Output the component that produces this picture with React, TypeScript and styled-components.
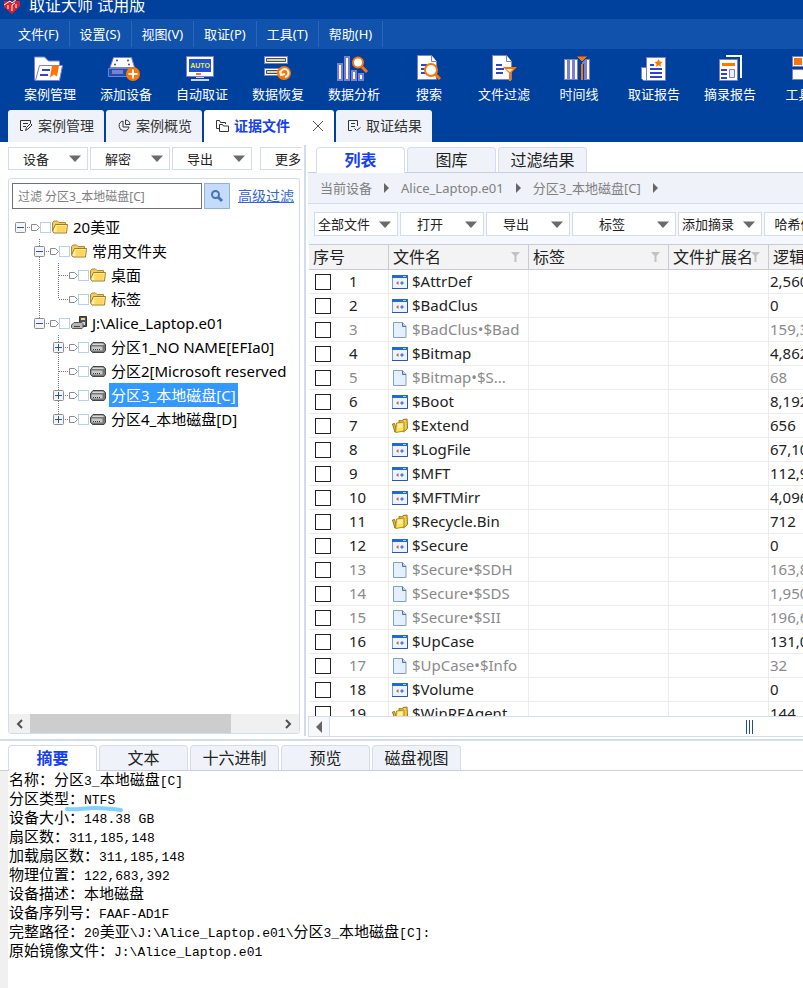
import React from "react";
import styled, { createGlobalStyle, css } from "styled-components";

const line = "#d3dcef";
const sans = `"Noto Sans", "Noto Sans CJK SC", sans-serif`;

const Global = createGlobalStyle`
  *, *::before, *::after { box-sizing: border-box; }
  body { margin: 0; background: #fff; color: #222; font-family: ${sans}; font-size: 13px; }
  button, input { font: inherit; color: inherit; }
  button { cursor: pointer; margin: 0; }
`;

const App_ = styled.div`
  display: flex;
  flex-direction: column;
  height: 100vh;
  overflow: hidden;
`;

/* ---------- header ---------- */
const Header = styled.header`
  background: #00419d;
  color: #fff;
  overflow: hidden;
  flex: none;
`;
const TitleBar = styled.div`
  display: flex;
  align-items: flex-end;
  gap: 8px;
  height: 19px;
  padding-left: 3px;
  overflow: hidden;
  font-size: 16px;
  line-height: 28px;
  svg { flex: none; margin-bottom: 5px; }
`;
const MenuBar = styled.nav`
  display: flex;
  height: 30px;
  padding: 2px 8px;
  background: #1152ad;
`;
const MenuItem = styled.button`
  border: 0;
  border-right: 1px solid #2c66b9;
  background: none;
  padding: 0 10px;
  font-size: 13px;
  line-height: 26px;
  white-space: nowrap;
`;
const Toolbar = styled.div`
  display: flex;
  padding: 6px 12px;
  height: 61px;
`;
const Tool = styled.button`
  display: flex;
  flex: none;
  flex-direction: column;
  align-items: center;
  gap: 4px;
  min-width: 74px;
  padding: 0 12px;
  border: 0;
  background: none;
  line-height: 18px;
  white-space: nowrap;
  svg { flex: none; overflow: visible; }
`;
const DocTabs = styled.div`
  display: flex;
  gap: 2px;
  padding-left: 8px;
`;
const DocTab = styled.div<{ $active?: boolean }>`
  display: flex;
  align-items: center;
  height: 32px;
  padding: 0 10px 0 11px;
  border-radius: 3px 3px 0 0;
  background: ${(p) => (p.$active ? "#fff" : "#eff3f9")};
  color: #333;
`;
const DocTabButton = styled.button<{ $active?: boolean }>`
  display: flex;
  align-items: center;
  gap: 5px;
  padding: 0;
  border: 0;
  background: none;
  font-size: 14px;
  line-height: 24px;
  white-space: nowrap;
  ${(p) => p.$active && css`font-weight: 700; color: #1440ee;`}
  svg { color: #333; }
`;
const CloseButton = styled.button`
  display: flex;
  margin-left: 22px;
  padding: 0;
  border: 0;
  background: none;
`;

/* ---------- workspace ---------- */
const Workspace = styled.main`
  display: flex;
  flex: 1;
  min-height: 0;
`;
const Sidebar = styled.aside`
  display: flex;
  flex-direction: column;
  flex: 0 0 302px;
  min-width: 0;
  gap: 8px;
  padding: 5px 0 5px 8px;
`;
const DropRow = styled.div<{ $inset?: boolean }>`
  display: flex;
  flex: none;
  gap: 2px;
  overflow: hidden;
  ${(p) => p.$inset && css`padding: 8px 0 8px 6px; background: #f4f7fd;`}
`;
const Drop = styled.button<{ $size?: "small" | "medium" | "wide"; $apart?: boolean }>`
  display: flex;
  flex: none;
  align-items: center;
  gap: 6px;
  width: ${(p) => (p.$size === "wide" ? 104 : p.$size === "medium" ? 84 : 80)}px;
  height: ${(p) => (p.$size ? 24 : 23)}px;
  padding: 0 6px 0 0;
  margin-left: ${(p) => (p.$apart ? 6 : 0)}px;
  border: 1px solid ${line};
  background: #fff;
  line-height: 20px;
  white-space: nowrap;
  span { flex: 1; text-align: center; }
  svg { flex: none; }
`;
const TreePanel = styled.section`
  display: flex;
  flex: 1;
  flex-direction: column;
  min-height: 0;
  margin-right: 2px;
  border: 1px solid ${line};
  border-radius: 3px;
  overflow: hidden;
`;
const FilterForm = styled.form`
  display: flex;
  align-items: center;
  gap: 2px;
  padding: 4px 5px 6px 3px;
`;
const FilterInput = styled.input`
  flex: 1;
  min-width: 0;
  height: 26px;
  padding: 0 5px;
  border: 1px solid #707070;
  background: #fff;
  font-size: 12px;
  &::placeholder { color: #808080; opacity: 1; }
`;
const SearchButton = styled.button`
  display: grid;
  place-items: center;
  width: 26px;
  height: 26px;
  padding: 0;
  border: 1px solid #8eb1de;
  background: #c5dbfc;
`;
const AdvancedLink = styled.a`
  margin-left: 6px;
  color: #3266d6;
  font-size: 14px;
  line-height: 24px;
  white-space: nowrap;
`;
const Tree = styled.ul`
  flex: 1;
  min-height: 0;
  margin: 0;
  padding: 0 0 0 6px;
  list-style: none;
  overflow: hidden;
`;
const TreeRow = styled.li`
  display: flex;
  align-items: center;
  height: 24px;
  color: #000;
  svg { flex: none; }
`;
const TreeCheck = styled.input`
  appearance: none;
  flex: none;
  width: 11px;
  height: 11px;
  margin: 0 1px 0 0;
  border: 1px solid #b5cffb;
  background: #fff;
`;
const TreeLabel = styled.label<{ $selected?: boolean }>`
  margin-left: 3px;
  padding: 0 2px;
  font-size: 15px;
  line-height: 24px;
  white-space: nowrap;
  ${(p) => p.$selected && css`background: #3399ff; color: #fff;`}
`;
const TreeScroll = styled.div`
  display: flex;
  flex: none;
  height: 19px;
  background: #f0f0f0;
`;
const ScrollArrow = styled.button`
  display: grid;
  place-items: center;
  flex: none;
  width: 21px;
  padding: 0;
  border: 0;
  background: none;
`;
const ScrollTrack = styled.div`
  flex: 1;
`;
const ScrollThumb = styled.div`
  width: 81%;
  height: 100%;
  background: #cdcdcd;
`;
const Splitter = styled.div`
  flex: none;
  width: 2px;
  margin: 3px 2px;
  background: ${line};
`;

const Content = styled.section`
  display: flex;
  flex: 1;
  flex-direction: column;
  min-width: 0;
  padding: 5px 0 2px;
`;
const Tabs = styled.div`
  display: flex;
  flex: none;
  gap: 2px;
  padding-left: 8px;
  border-bottom: 1px solid #c9cfe0;
`;
const Tab = styled.button<{ $active?: boolean }>`
  display: flex;
  justify-content: center;
  flex: none;
  width: 89px;
  height: 25px;
  padding: 0;
  border: 1px solid ${line};
  border-bottom: 0;
  border-radius: 4px 4px 0 0;
  background: #eff3f9;
  font-size: 16px;
  line-height: 24px;
  white-space: nowrap;
  ${(p) =>
    p.$active &&
    css`
      margin-bottom: -1px;
      height: 26px;
      background: #fff;
      color: #1440ee;
      font-weight: 700;
    `}
`;
const Crumbs = styled.nav`
  display: flex;
  flex: none;
  align-items: center;
  gap: 12px;
  height: 31px;
  padding-left: 12px;
  border-bottom: 1px solid ${line};
  background: #eff2f8;
  color: #808080;
  white-space: nowrap;
  a { color: inherit; text-decoration: none; line-height: 20px; }
`;
const GridArea = styled.div`
  flex: 1;
  min-height: 0;
  padding-left: 1px;
  overflow: hidden;
`;
const Grid = styled.table`
  width: 100%;
  min-width: 640px;
  border-collapse: separate;
  border-spacing: 0;
  table-layout: fixed;
  font-size: 15px;
`;
const Th = styled.th`
  height: 26px;
  padding: 0 4px;
  border: 1px solid #c9c9da;
  border-left: 0;
  background: #f3f3f3;
  font-size: 16px;
  font-weight: 400;
  line-height: 24px;
  text-align: left;
  div { display: flex; align-items: center; justify-content: space-between; white-space: nowrap; }
  svg { flex: none; margin-left: -4px; margin-right: 4px; }
`;
const Tr = styled.tr<{ $muted?: boolean }>`
  color: ${(p) => (p.$muted ? "#8a8a8a" : "#222")};
`;
const Td = styled.td`
  height: 24px;
  padding: 0;
  border-right: 1px solid #ececec;
  border-bottom: 1px solid #ececec;
  line-height: 23px;
  white-space: nowrap;
  &:last-child { padding-left: 1px; }
`;
const IndexLabel = styled.label`
  display: flex;
  align-items: center;
  gap: 18px;
  padding-left: 6px;
`;
const RowCheck = styled.input`
  appearance: none;
  width: 16px;
  height: 16px;
  margin: 0;
  border: 1px solid #222;
  background: #fff;
`;
const FileName = styled.div`
  display: flex;
  align-items: center;
  gap: 4px;
  padding-left: 3px;
  svg { flex: none; }
`;
const GridScroll = styled.div`
  display: flex;
  flex: none;
  height: 21px;
  border: 1px solid ${line};
  border-right: 0;
`;
const GridArrow = styled.button`
  display: grid;
  place-items: center;
  width: 21px;
  padding: 0;
  border: 0;
  border-right: 1px solid ${line};
  background: #f6f8fc;
`;
const GridThumb = styled.div`
  display: flex;
  align-items: center;
  justify-content: flex-end;
  flex: 1;
  padding-right: 49px;
`;

/* ---------- details ---------- */
const Details = styled.section`
  display: flex;
  flex: 0 0 249px;
  flex-direction: column;
  padding-top: 4px;
  border-top: 2px solid ${line};
`;
const Report = styled.div`
  flex: 1;
  min-height: 0;
  padding: 0 1px;
  border-left: 8px solid #f0f0f0;
  color: #000;
  font-family: "Liberation Mono", "Noto Sans CJK SC", monospace;
  font-size: 13px;
  overflow: hidden;
`;
const ReportLine = styled.p`
  margin: 0;
  height: 19px;
  line-height: 15px;
  white-space: pre;
`;
const Han = styled.span`
  font-family: "Noto Sans CJK SC", sans-serif;
  font-size: 15px;
`;
const Marked = styled.span`
  position: relative;
  svg { position: absolute; left: -20px; top: 12px; }
`;

/* ---------- icons ---------- */
const P = "#7a80cf";
const O = "#ff7500";
const B = "#3344cc";

const ToolSvg = ({ children }: { children: React.ReactNode }) => (
  <svg width="34" height="26" viewBox="0 0 34 26" aria-hidden="true">{children}</svg>
);

const Doc = () => (
  <g>
    <path d="M5.500 .5h14l5 6v18h-19z" fill="#fff" stroke={P} />
    <path d="M19.500 .5v6h5" fill="#fff" stroke={P} />
    <path d="M9 10h6M9 14h8M9 18h7" stroke={B} strokeWidth="2" />
  </g>
);

const toolIcons: Record<string, React.ReactNode> = {
  case: (
    <>
      <path d="M1.500 25V2h10l4 4h11v5h-3L5 25z" fill="#fff" stroke={P} />
      <path d="M6.500 10.500h23L26.500 25.500h-24z" fill="#fff" stroke={P} />
      <path d="M9 15h8M7 20h8" stroke={B} strokeWidth="2" />
      <path d="M19 10.500h7l-2 11-3-2-4 3z" fill={O} />
    </>
  ),
  device: (
    <>
      <path d="M4.500 2.500h18l3 10H1z" fill="#fff" stroke={P} />
      <g fill={B}><circle cx="8" cy="5.500" r="1" /><circle cx="19" cy="5.500" r="1" /><circle cx="6" cy="9.500" r="1" /><circle cx="20" cy="9.500" r="1" /></g>
      <path d="M-.5 13.500h26v8h-26z" fill="#1c52ae" stroke={P} />
      <path d="M3 15h11v4H3z" fill={P} />
      <circle cx="24" cy="19" r="7" fill={O} />
      <path d="M24 14.500v9M19.500 19h9" stroke="#fff" strokeWidth="2" />
    </>
  ),
  auto: (
    <>
      <path d="M1.500 1.500h27v20h-27z" fill="#fff" stroke={P} />
      <path d="M4 4h22v13H4z" fill="#1b52dc" />
      <text x="15" y="13" fontSize="7" fontWeight="700" fontFamily="Liberation Sans, sans-serif" textAnchor="middle" fill="#f2ee2a">AUTO</text>
      <path d="M11 18h5v2h-5z" fill={O} />
      <path d="M11 22h8v1h-8zM6 24h18v2H6z" fill="#cfd4f4" />
    </>
  ),
  restore: (
    <>
      <path d="M3.500 1.500h23v7h-23zM3.500 13.500h23v7h-23z" fill="#fff" stroke={P} />
      <path d="M5.500 3.500h19v3h-19zM5.500 15.500h12v3h-12z" fill="#e8e02c" stroke={B} />
      <circle cx="23" cy="18" r="7" fill={O} />
      <path d="M20 20a4 4 0 1 1 4 2M19 16l1 4 4-1" fill="none" stroke="#fff" strokeWidth="2" />
    </>
  ),
  analyse: (
    <>
      <g fill="#fff" stroke={P} strokeWidth="2"><path d="M1 9h4v16H1zM8 2h4v23H8zM15 16h4v9h-4zM22 19h4v6h-4z" /></g>
      <path d="M25 12l5 5" stroke={O} strokeWidth="3" />
      <circle cx="21" cy="7.500" r="5" fill="#fff" stroke={O} strokeWidth="2" />
    </>
  ),
  search: (
    <>
      <Doc />
      <path d="M23 19l5 5" stroke={O} strokeWidth="3" />
      <circle cx="19" cy="15" r="6" fill="#fff" stroke={O} strokeWidth="2" />
    </>
  ),
  filter: (
    <>
      <Doc />
      <path d="M16 12h14l-6 6v8h-2v-8z" fill={O} />
      <path d="M19 14h7l-3 3z" fill="#fff" />
    </>
  ),
  timeline: (
    <>
      <path d="M2 4h14v21H2zM20 4h8v21h-8z" fill={P} />
      <path d="M3 5h2v19H3zM8 5h2v19H8zM13 5h2v19h-2zM25 5h2v19h-2z" fill="#fff" />
      <path d="M14 1h12l-6 6z" fill={O} stroke="#00419d" />
      <path d="M18 9h4v17h-4z" fill="#00419d" />
      <path d="M19 9h2v16h-2z" fill={O} />
    </>
  ),
  report: (
    <>
      <path d="M4.500 12.500h6v13h-4l-2-2z" fill="#fff" stroke={P} />
      <path d="M9.500 2.500h19v23h-19z" fill="#fff" stroke={P} />
      <path d="M13 10h4M13 14h12M13 18h12M13 22h12" stroke={B} strokeWidth="2" />
      <path d="M21.500 4l1.200 2.600 2.800.3-2 2 .5 2.800-2.500-1.400-2.500 1.400.5-2.800-2-2 2.800-.3z" fill={O} />
    </>
  ),
  excerpt: (
    <>
      <path d="M13 1h15v22" fill="none" stroke="#fff" strokeWidth="2" />
      <path d="M6.500 4.500h18v21h-18z" fill="#fff" stroke={P} />
      <path d="M9 8h13v3H9z" fill={O} />
      <path d="M8 15h6M8 19h6M8 23h6" stroke={B} strokeWidth="2" />
      <path d="M16.500 14.500h5v8h-5z" fill="#eef" stroke={P} />
    </>
  ),
  toolbox: (
    <>
      <path d="M4.500 1.500h11v10h-11zM18.500 1.500h11v10h-11zM4.500 14.500h11v10h-11zM18.500 14.500h11v10h-11z" fill="#fff" stroke={P} />
      <path d="M6 3h8v7H6z" fill={O} />
    </>
  ),
};

const Caret = () => (
  <svg width="12" height="7" viewBox="0 0 12 7" aria-hidden="true"><path d="M0 .5h12L6 7z" fill="#6a6a6a" /></svg>
);
const CrumbArrow = () => (
  <svg width="5" height="10" viewBox="0 0 5 10" aria-hidden="true"><path d="M0 0l5 5-5 5z" fill="#666" /></svg>
);
const FunnelIcon = () => (
  <svg width="9" height="10" viewBox="0 0 9 10" aria-hidden="true"><path d="M0 0h9L5.500 4v6h-2V4z" fill="#c2c2c2" /></svg>
);

const tabIcons: Record<string, React.ReactNode> = {
  edit: <path d="M4 11.500H1.500v-10h10V4M4 4.500h5M4 7.500h3M6.500 11.500l1-3 4-4 1.500 1.500-4 4z" />,
  pie: <path d="M6 2a5 5 0 1 0 6 6H6zM8.500 1v4.500H13A4.500 4.500 0 0 0 8.500 1z" />,
  folders: <path d="M4 9.500H1.500v-8h3l1 2h5V5M4.500 12.500v-7h3l1 1.500h5v5.500z" />,
  check: <path d="M5 11.500H1.500v-10h9V7M4 4.500h4M4 7.500h4M7.500 9.500l2 2 4-3" />,
};
const TabIcon = ({ name }: { name: string }) => (
  <svg width="14" height="14" viewBox="0 0 14 14" fill="none" stroke="currentColor" aria-hidden="true">{tabIcons[name]}</svg>
);

const FolderIcon = () => (
  <svg width="16" height="14" viewBox="0 0 16 14" aria-hidden="true">
    <path d="M.5 11V2.500L2 1h3.500L7 2.500h6.500V5" fill="#f2cd5c" stroke="#b58a24" />
    <path d="M3.500 4.500h12l-1 8.500H2L.5 11z" fill="#ffefab" stroke="#a87b12" />
    <path d="M4.500 6h9.500l-.5 6h-9z" fill="#ffd75e" />
  </svg>
);
const DriveIcon = () => (
  <svg width="16" height="11" viewBox="0 0 16 11" aria-hidden="true">
    <path d="M3 .5h10.500l2 2v6l-1.500 2H2.500l-2-2v-5z" fill="#777" stroke="#444" />
    <path d="M3 1.500h10l1 1.500H2z" fill="#d8d8d8" />
    <path d="M1.500 4.500h11v4h-11z" fill="#c9c9c9" />
    <path d="M3 7.500h8" stroke="#333" strokeDasharray="1 1" />
    <path d="M12 5h1v1h-1z" fill="#46c046" />
  </svg>
);
const ImageIcon = () => (
  <svg width="16" height="14" viewBox="0 0 16 14" aria-hidden="true">
    <path d="M8.500 .5h7v10h-7z" fill="#555" stroke="#333" />
    <path d="M10 2h4v2h-4z" fill="#e7df7d" />
    <path d="M10 6h4v3h-4z" fill="#ddd" />
    <path d="M3 6.500h8l1 1v4l-1 1H1.500l-1-1V9z" fill="#b6b6b6" stroke="#555" />
    <path d="M3 10.500h6" stroke="#444" />
  </svg>
);
const ListFolderIcon = () => (
  <svg width="16" height="16" viewBox="0 0 16 16" aria-hidden="true">
    <path d="M7 4V2.500L10 3l1-1.500 4-.5.500 9.500-4 3.500z" fill="#f0cd4c" stroke="#9a7314" />
    <path d="M.5 6l2-.5L4 10l-1 4z" fill="#e3c04a" stroke="#9a7314" />
    <path d="M4.500 5L12 4v9l-8.500 1.500z" fill="#ffe25f" stroke="#b28b1c" />
    <path d="M6 6.500l4.500-.5v3L6 10z" fill="#fff4b0" />
  </svg>
);
const SystemIcon = () => (
  <svg width="16" height="16" viewBox="0 0 16 16" aria-hidden="true">
    <path d="M.5 1.500h15v13H.5z" fill="#eef4fe" stroke="#6f9be6" />
    <path d="M0 14.500h15.500V2" fill="none" stroke="#1f55c4" />
    <path d="M0 1h16v3H0z" fill="#2566d8" />
    <path d="M11 2h3v1h-3z" fill="#a9c8ff" />
    <path d="M4 9l2.500-2v4z" fill="#d35454" /><path d="M8 9l2-2 2 2-2 2z" fill="#4c7ed6" />
  </svg>
);
const PageIcon = () => (
  <svg width="16" height="18" viewBox="0 0 16 18" aria-hidden="true">
    <path d="M1.500 1.500h9l3.500 4v11H1.500z" fill="#e4f0fc" stroke="#7ba2cc" />
    <path d="M10.500 1.500v4H14" fill="#b7d3ef" stroke="#4d7299" />
  </svg>
);

/* ---------- data ---------- */
const menus = ["文件(F)", "设置(S)", "视图(V)", "取证(P)", "工具(T)", "帮助(H)"];
const tools = [
  ["case", "案例管理"], ["device", "添加设备"], ["auto", "自动取证"], ["restore", "数据恢复"],
  ["analyse", "数据分析"], ["search", "搜索"], ["filter", "文件过滤"], ["timeline", "时间线"],
  ["report", "取证报告"], ["excerpt", "摘录报告"], ["toolbox", "工具箱"],
];

type Node = {
  text: string;
  depth: number;
  icon: "folder" | "image" | "drive";
  box?: "+" | "-";
  last?: boolean;
  rail?: boolean;
  selected?: boolean;
};
const nodes: Node[] = [
  { text: "20美亚", depth: 0, icon: "folder", box: "-" },
  { text: "常用文件夹", depth: 1, icon: "folder", box: "-" },
  { text: "桌面", depth: 2, icon: "folder", rail: true },
  { text: "标签", depth: 2, icon: "folder", rail: true, last: true },
  { text: "J:\\Alice_Laptop.e01", depth: 1, icon: "image", box: "-", last: true },
  { text: "分区1_NO NAME[EFIa0]", depth: 2, icon: "drive", box: "+" },
  { text: "分区2[Microsoft reserved", depth: 2, icon: "drive" },
  { text: "分区3_本地磁盘[C]", depth: 2, icon: "drive", box: "+", selected: true },
  { text: "分区4_本地磁盘[D]", depth: 2, icon: "drive", box: "+", last: true },
];

type File = [name: string, kind: "sys" | "page" | "dir", size: string];
const files: File[] = [
  ["$AttrDef", "sys", "2,560"],
  ["$BadClus", "sys", "0"],
  ["$BadClus•$Bad", "page", "159,326,810"],
  ["$Bitmap", "sys", "4,862,272"],
  ["$Bitmap•$S...", "page", "68"],
  ["$Boot", "sys", "8,192"],
  ["$Extend", "dir", "656"],
  ["$LogFile", "sys", "67,108,864"],
  ["$MFT", "sys", "112,984,064"],
  ["$MFTMirr", "sys", "4,096"],
  ["$Recycle.Bin", "dir", "712"],
  ["$Secure", "sys", "0"],
  ["$Secure•$SDH", "page", "163,840"],
  ["$Secure•$SDS", "page", "1,950,000"],
  ["$Secure•$SII", "page", "196,608"],
  ["$UpCase", "sys", "131,072"],
  ["$UpCase•$Info", "page", "32"],
  ["$Volume", "sys", "0"],
  ["$WinREAgent", "dir", "144"],
];

const report = [
  "名称：分区3_本地磁盘[C]",
  "分区类型：NTFS",
  "设备大小：148.38 GB",
  "扇区数：311,185,148",
  "加载扇区数：311,185,148",
  "物理位置：122,683,392",
  "设备描述：本地磁盘",
  "设备序列号：FAAF-AD1F",
  "完整路径：20美亚\\J:\\Alice_Laptop.e01\\分区3_本地磁盘[C]:",
  "原始镜像文件：J:\\Alice_Laptop.e01",
];

/* ---------- parts ---------- */
const Rail = () => (
  <svg width="19" height="24" aria-hidden="true"><path d="M5.500 0v24" stroke="#777" strokeDasharray="1 1" /></svg>
);
const Gap = () => <svg width="19" height="24" aria-hidden="true" />;

const Joint = ({ node }: { node: Node }) => (
  <svg width="16" height="24" aria-hidden="true">
    {node.depth > 0 && <path d={`M5.500 0v${node.last ? 12 : 24}`} stroke="#777" strokeDasharray="1 1" />}
    <path d="M6 12.500h10" stroke="#777" strokeDasharray="1 1" />
    {node.box && (
      <>
        <rect x=".5" y="7.500" width="10" height="10" rx="1" fill="#f4f4f4" stroke="#8c8c8c" />
        <path d={node.box === "+" ? "M2 12.500h7M5.500 9v7" : "M2 12.500h7"} stroke="#2f4f9f" />
      </>
    )}
  </svg>
);

const TreeItem = ({ node, id }: { node: Node; id: string }) => (
  <TreeRow>
    {node.depth > 0 && <Gap />}
    {node.depth > 1 && (node.rail ? <Rail /> : <Gap />)}
    <Joint node={node} />
    <svg width="9" height="9" aria-hidden="true"><path d="M.5 1.500h5l3 3-3 3h-5z" fill="#fff" stroke="#8a8a8a" /></svg>
    <TreeCheck type="checkbox" id={id} />
    {node.icon === "folder" ? <FolderIcon /> : node.icon === "image" ? <ImageIcon /> : <DriveIcon />}
    <TreeLabel htmlFor={id} $selected={node.selected}>{node.text}</TreeLabel>
  </TreeRow>
);

const Mixed = ({ text }: { text: string }) => (
  <>
    {text.split(/([\u3000-\u9fff\uff00-\uffef]+)/).filter(Boolean).map((part, i) =>
      /[\u3000-\u9fff\uff00-\uffef]/.test(part) ? (
        <Han key={i}>{part}</Han>
      ) : part === "NTFS" ? (
        <Marked key={i}>
          {part}
          <svg width="60" height="8" aria-hidden="true">
            <path d="M3 4C12 5 20 3 31 3s18 1 26 2" fill="none" stroke="#7fd2fb" strokeWidth="4" strokeLinecap="round" />
          </svg>
        </Marked>
      ) : (
        <React.Fragment key={i}>{part}</React.Fragment>
      )
    )}
  </>
);

const TabStrip = ({ items }: { items: string[] }) => (
  <Tabs role="tablist">
    {items.map((t, i) => (
      <Tab key={t} role="tab" aria-selected={i === 0} $active={i === 0}>{t}</Tab>
    ))}
  </Tabs>
);

export default function App() {
  return (
    <App_>
      <Global />
      <Header>
        <TitleBar>
          <svg width="18" height="18" viewBox="0 0 18 18" aria-hidden="true">
            <path d="M1 5h16v5l-8 8-8-7z" fill="#d92330" />
            <path d="M1 9l6-4 2 2 5-4M5 13V9M9 15V9l3-2M13 12V8" stroke="#fff" fill="none" />
          </svg>
          <span>取证大师 试用版</span>
        </TitleBar>
        <MenuBar>
          {menus.map((m) => <MenuItem key={m}>{m}</MenuItem>)}
        </MenuBar>
        <Toolbar>
          {tools.map(([icon, label]) => (
            <Tool key={icon}>
              <ToolSvg>{toolIcons[icon]}</ToolSvg>
              {label}
            </Tool>
          ))}
        </Toolbar>
        <DocTabs>
          <DocTab><DocTabButton><TabIcon name="edit" />案例管理</DocTabButton></DocTab>
          <DocTab><DocTabButton><TabIcon name="pie" />案例概览</DocTabButton></DocTab>
          <DocTab $active>
            <DocTabButton $active><TabIcon name="folders" />证据文件</DocTabButton>
            <CloseButton aria-label="关闭">
              <svg width="12" height="12" viewBox="0 0 12 12" aria-hidden="true"><path d="M1 1l10 10M11 1L1 11" stroke="#555" /></svg>
            </CloseButton>
          </DocTab>
          <DocTab><DocTabButton><TabIcon name="check" />取证结果</DocTabButton></DocTab>
        </DocTabs>
      </Header>

      <Workspace>
        <Sidebar>
          <DropRow>
            <Drop><span>设备</span><Caret /></Drop>
            <Drop><span>解密</span><Caret /></Drop>
            <Drop><span>导出</span><Caret /></Drop>
            <Drop $apart><span>更多</span><Caret /></Drop>
          </DropRow>
          <TreePanel>
            <FilterForm onSubmit={(e) => e.preventDefault()}>
              <FilterInput aria-label="过滤" placeholder="过滤 分区3_本地磁盘[C]" />
              <SearchButton aria-label="搜索">
                <svg width="14" height="14" viewBox="0 0 14 14" aria-hidden="true">
                  <circle cx="5.500" cy="5.500" r="3.500" fill="none" stroke="#4574bb" strokeWidth="2" />
                  <path d="M8 8l4 4" stroke="#4574bb" strokeWidth="3" />
                </svg>
              </SearchButton>
              <AdvancedLink href="#advanced">高级过滤</AdvancedLink>
            </FilterForm>
            <Tree>
              {nodes.map((n, i) => <TreeItem key={n.text} node={n} id={`node-${i}`} />)}
            </Tree>
            <TreeScroll>
              <ScrollArrow aria-label="向左">
                <svg width="7" height="10" aria-hidden="true"><path d="M6 1L2 5l4 4" fill="none" stroke="#505050" strokeWidth="2" /></svg>
              </ScrollArrow>
              <ScrollTrack><ScrollThumb /></ScrollTrack>
              <ScrollArrow aria-label="向右">
                <svg width="7" height="10" aria-hidden="true"><path d="M1 1l4 4-4 4" fill="none" stroke="#505050" strokeWidth="2" /></svg>
              </ScrollArrow>
            </TreeScroll>
          </TreePanel>
        </Sidebar>
        <Splitter />
        <Content>
          <TabStrip items={["列表", "图库", "过滤结果"]} />
          <Crumbs>
            <a href="#device">当前设备</a><CrumbArrow />
            <a href="#image">Alice_Laptop.e01</a><CrumbArrow />
            <a href="#partition">分区3_本地磁盘[C]</a><CrumbArrow />
          </Crumbs>
          <DropRow $inset>
            <Drop $size="medium"><span>全部文件</span><Caret /></Drop>
            <Drop $size="medium"><span>打开</span><Caret /></Drop>
            <Drop $size="medium"><span>导出</span><Caret /></Drop>
            <Drop $size="wide"><span>标签</span><Caret /></Drop>
            <Drop $size="medium"><span>添加摘录</span><Caret /></Drop>
            <Drop $size="medium"><span>哈希值</span><Caret /></Drop>
          </DropRow>
          <GridArea>
            <Grid>
              <colgroup>
                <col width="80" /><col width="140" /><col width="140" /><col width="100" /><col />
              </colgroup>
              <thead>
                <tr>
                  <Th>序号</Th>
                  <Th><div>文件名<FunnelIcon /></div></Th>
                  <Th><div>标签<FunnelIcon /></div></Th>
                  <Th><div>文件扩展名<FunnelIcon /></div></Th>
                  <Th>逻辑大小</Th>
                </tr>
              </thead>
              <tbody>
                {files.map(([name, kind, size], i) => (
                  <Tr key={name} $muted={kind === "page"}>
                    <Td><IndexLabel><RowCheck type="checkbox" />{i + 1}</IndexLabel></Td>
                    <Td>
                      <FileName>
                        {kind === "sys" ? <SystemIcon /> : kind === "page" ? <PageIcon /> : <ListFolderIcon />}
                        {name}
                      </FileName>
                    </Td>
                    <Td />
                    <Td />
                    <Td>{size}</Td>
                  </Tr>
                ))}
              </tbody>
            </Grid>
          </GridArea>
          <GridScroll>
            <GridArrow aria-label="向左">
              <svg width="6" height="12" aria-hidden="true"><path d="M6 0v12L0 6z" fill="#666" /></svg>
            </GridArrow>
            <GridThumb>
              <svg width="8" height="14" aria-hidden="true"><path d="M.5 0v14M3.500 0v14M6.500 0v14" stroke="#1a4f9c" /></svg>
            </GridThumb>
          </GridScroll>
        </Content>
      </Workspace>

      <Details>
        <TabStrip items={["摘要", "文本", "十六进制", "预览", "磁盘视图"]} />
        <Report>
          {report.map((r) => <ReportLine key={r}><Mixed text={r} /></ReportLine>)}
        </Report>
      </Details>
    </App_>
  );
}
